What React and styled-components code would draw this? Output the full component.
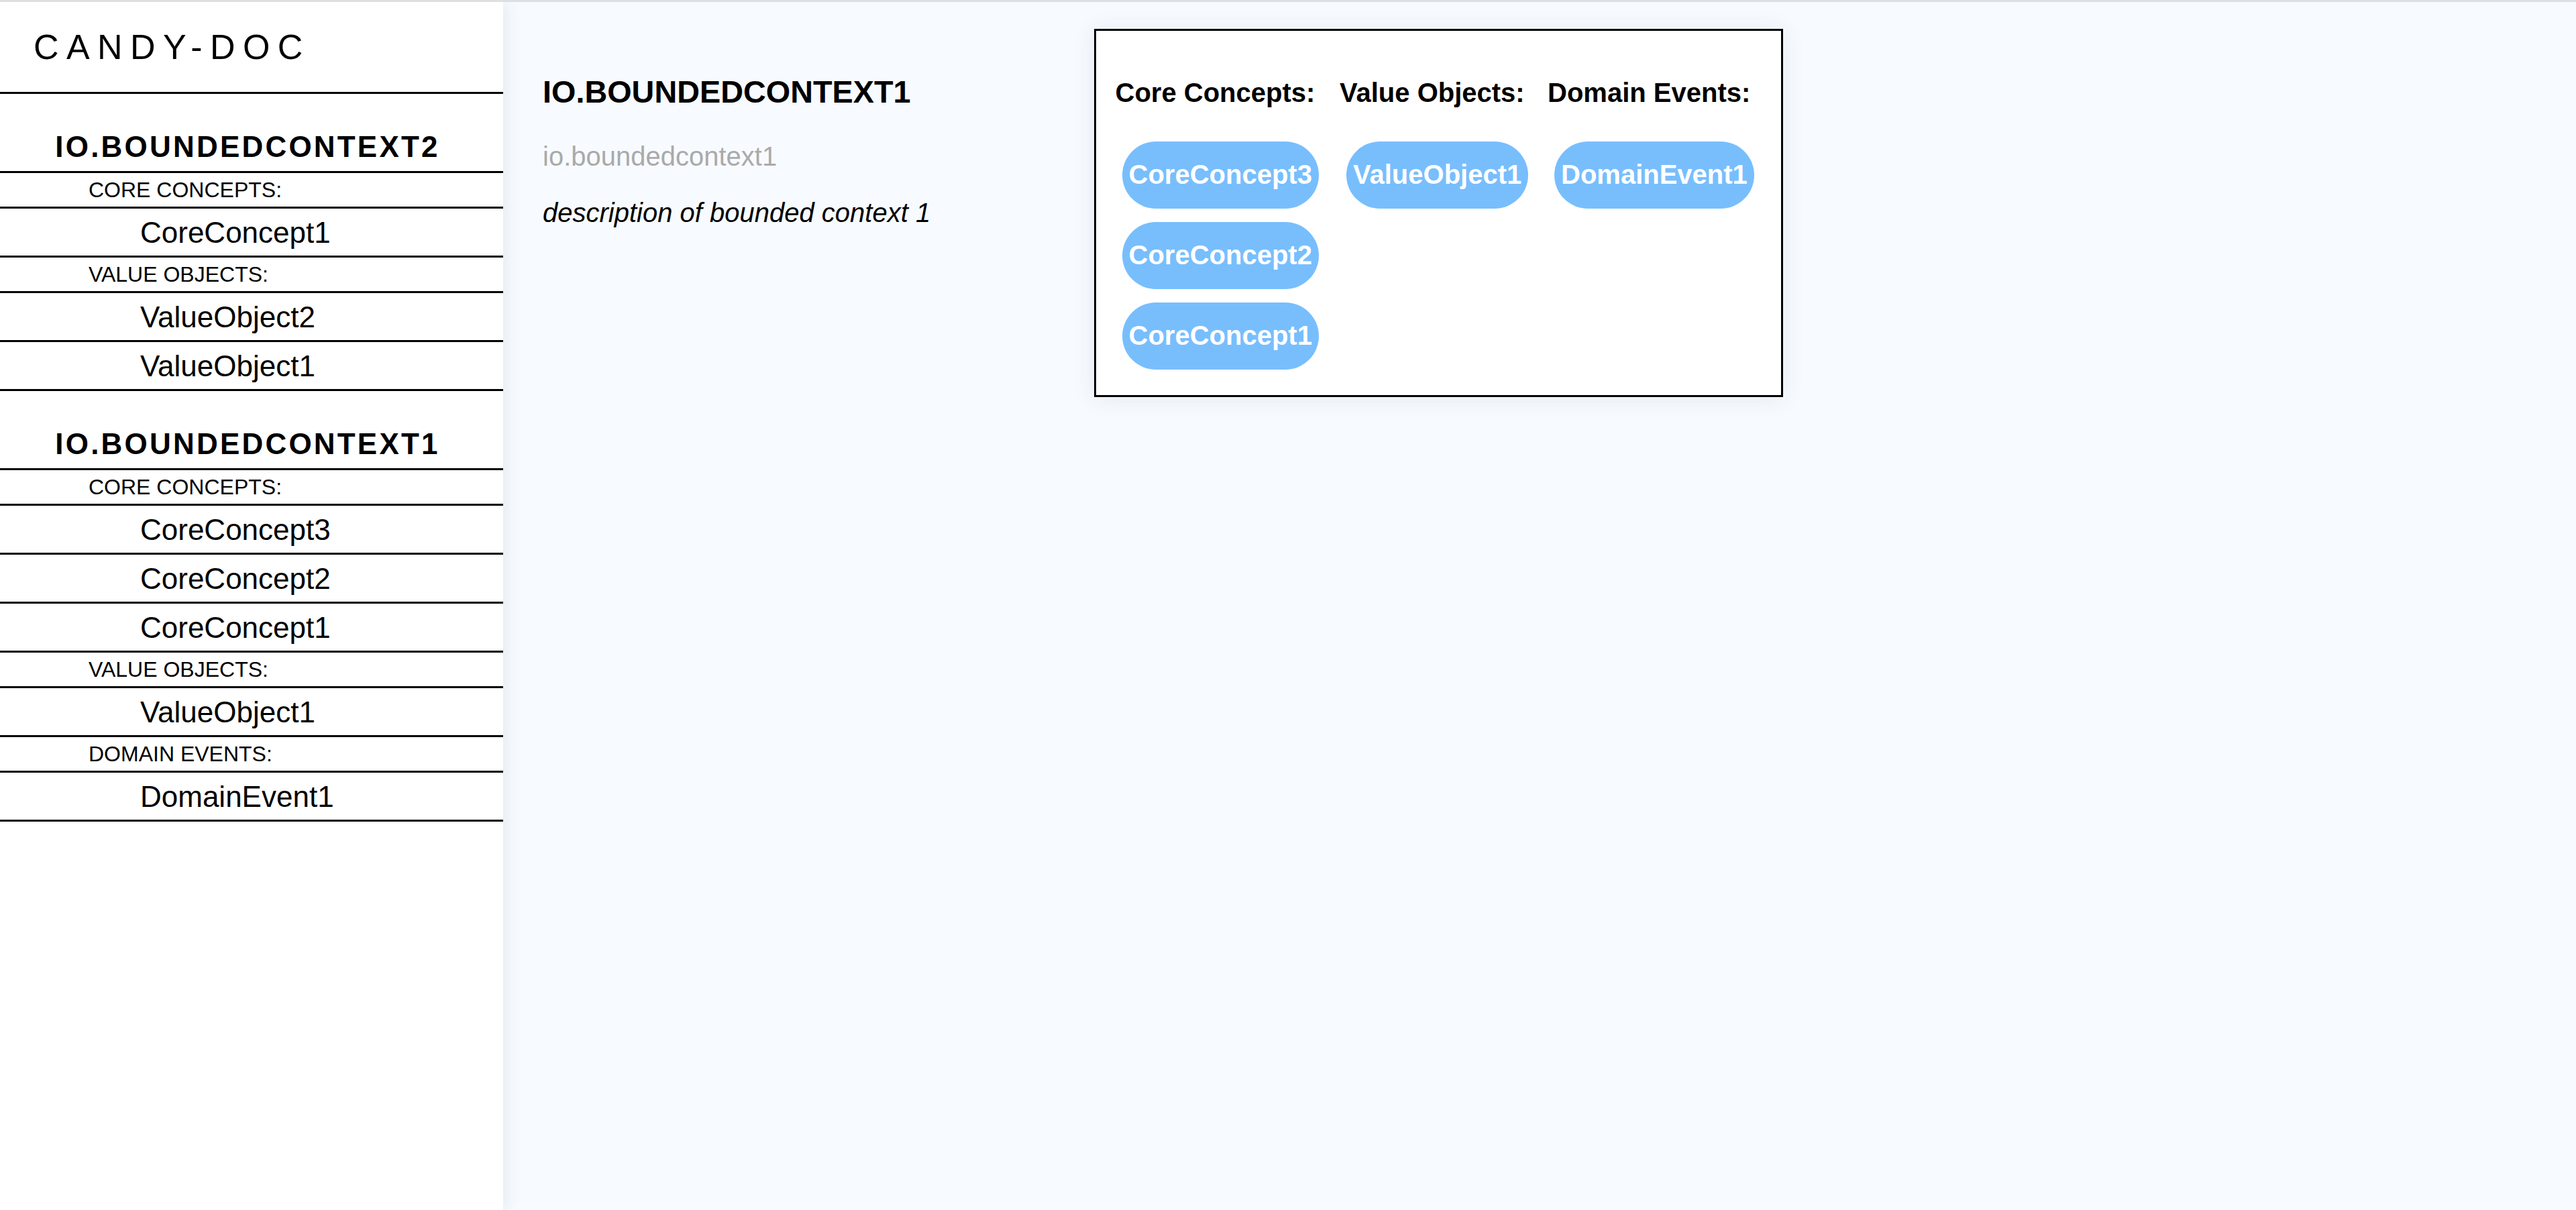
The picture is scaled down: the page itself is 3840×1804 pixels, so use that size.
import React from 'react';
import styled, { createGlobalStyle } from 'styled-components';

const GlobalStyle = createGlobalStyle`
  html, body {
    margin: 0;
    padding: 0;
  }
  body {
    border-top: 3px solid #dddfe3;
    font-family: "Liberation Sans", Arial, sans-serif;
    color: #000;
    background: #f7fbff;
  }
  * {
    box-sizing: border-box;
  }
`

const Layout = styled.div`
  display: flex;
  min-height: calc(100vh - 3px);
`

const Sidebar = styled.nav`
  width: 750px;
  flex-shrink: 0;
  background: #fff;
  box-shadow: 4px 0 22px rgba(40, 50, 70, 0.09);
  position: relative;
  z-index: 1;
`

const Brand = styled.div`
  height: 137px;
  display: flex;
  align-items: center;
  padding-left: 50px;
  border-bottom: 3px solid #000;
  font-size: 52px;
  letter-spacing: 11.4px;
  font-weight: 400;
`

const ContextHeading = styled.h2`
  margin: 0;
  height: 118px;
  display: flex;
  align-items: flex-end;
  justify-content: center;
  padding: 0 12px 11px 0;
  border-bottom: 3px solid #000;
  font-size: 44px;
  line-height: 51px;
  font-weight: 700;
  letter-spacing: 3.2px;
`

const CategoryRow = styled.div`
  height: 53px;
  display: flex;
  align-items: center;
  padding-left: 132px;
  border-bottom: 3px solid #000;
  font-size: 32px;
  line-height: 37px;
`

const ItemRow = styled.div`
  height: 73px;
  display: flex;
  align-items: center;
  padding-left: 209px;
  border-bottom: 3px solid #000;
  font-size: 44px;
  line-height: 51px;
`

const Main = styled.main`
  flex: 1;
  display: flex;
  align-items: flex-start;
  padding: 40px 0 0 59px;
  background: #f7fbff;
`

const Info = styled.section`
  width: 821.5px;
  flex-shrink: 0;
  padding-top: 67px;
`

const Title = styled.h3`
  margin: 0 0 46px;
  font-size: 46.8px;
  line-height: 54px;
  font-weight: 700;
`

const Identifier = styled.p`
  margin: 0 0 38px;
  font-size: 40px;
  line-height: 46px;
  color: #aaaaaa;
`

const Description = styled.p`
  margin: 0;
  font-size: 40px;
  line-height: 46px;
  font-style: italic;
`

const Overview = styled.div`
  display: flex;
  background: #fff;
  border: 3px solid #000;
  padding: 68.5px 40px 38.5px 29px;
  box-shadow: 0 2px 32px rgba(40, 60, 90, 0.09);
`

const Column = styled.div`
  width: ${p => p.$width || 'auto'};
  flex-shrink: 0;
`

const ColumnTitle = styled.h4`
  margin: 0;
  font-size: 40px;
  line-height: 46px;
  font-weight: 700;
  white-space: nowrap;
`

const Bubbles = styled.div`
  margin-top: 50px;
  padding-left: 10px;
  display: flex;
  flex-direction: column;
  align-items: flex-start;
  gap: 20px;
`

const Bubble = styled.span`
  height: 100px;
  display: flex;
  align-items: center;
  padding: 0 10px;
  border-radius: 50px;
  background: #78befd;
  color: #fff;
  font-size: 40px;
  font-weight: 700;
  white-space: nowrap;
`

const contexts = [
  {
    id: 'io.boundedcontext2',
    description: 'description of bounded context 2',
    coreConcepts: ['CoreConcept1'],
    valueObjects: ['ValueObject2', 'ValueObject1'],
    domainEvents: []
  },
  {
    id: 'io.boundedcontext1',
    description: 'description of bounded context 1',
    coreConcepts: ['CoreConcept3', 'CoreConcept2', 'CoreConcept1'],
    valueObjects: ['ValueObject1'],
    domainEvents: ['DomainEvent1']
  }
];

const groups = [
  {key: 'coreConcepts', nav: 'CORE CONCEPTS:', label: 'Core Concepts:', width: '334.5px'},
  {key: 'valueObjects', nav: 'VALUE OBJECTS:', label: 'Value Objects:', width: '310px'},
  {key: 'domainEvents', nav: 'DOMAIN EVENTS:', label: 'Domain Events:'}
];

export default function App() {
  const selected = contexts[1];

  return (
    <>
      <GlobalStyle />
      <Layout>
        <Sidebar>
          <Brand>CANDY-DOC</Brand>
          {contexts.map((ctx) => (
            <div key={ctx.id}>
              <ContextHeading>{ctx.id.toUpperCase()}</ContextHeading>
              {groups.filter(g => ctx[g.key].length > 0).map((g) => (
                <React.Fragment key={g.key}>
                  <CategoryRow>{g.nav}</CategoryRow>
                  {ctx[g.key].map((item) => (
                    <ItemRow key={item}>{item}</ItemRow>
                  ))}
                </React.Fragment>
              ))}
            </div>
          ))}
        </Sidebar>

        <Main>
          <Info>
            <Title>{selected.id.toUpperCase()}</Title>
            <Identifier>{selected.id}</Identifier>
            <Description>{selected.description}</Description>
          </Info>

          <Overview>
            {groups.map((g) => (
              <Column key={g.key} $width={g.width}>
                <ColumnTitle>{g.label}</ColumnTitle>
                <Bubbles>
                  {selected[g.key].map((item) => (
                    <Bubble key={item}>{item}</Bubble>
                  ))}
                </Bubbles>
              </Column>
            ))}
          </Overview>
        </Main>
      </Layout>
    </>
  )
}
